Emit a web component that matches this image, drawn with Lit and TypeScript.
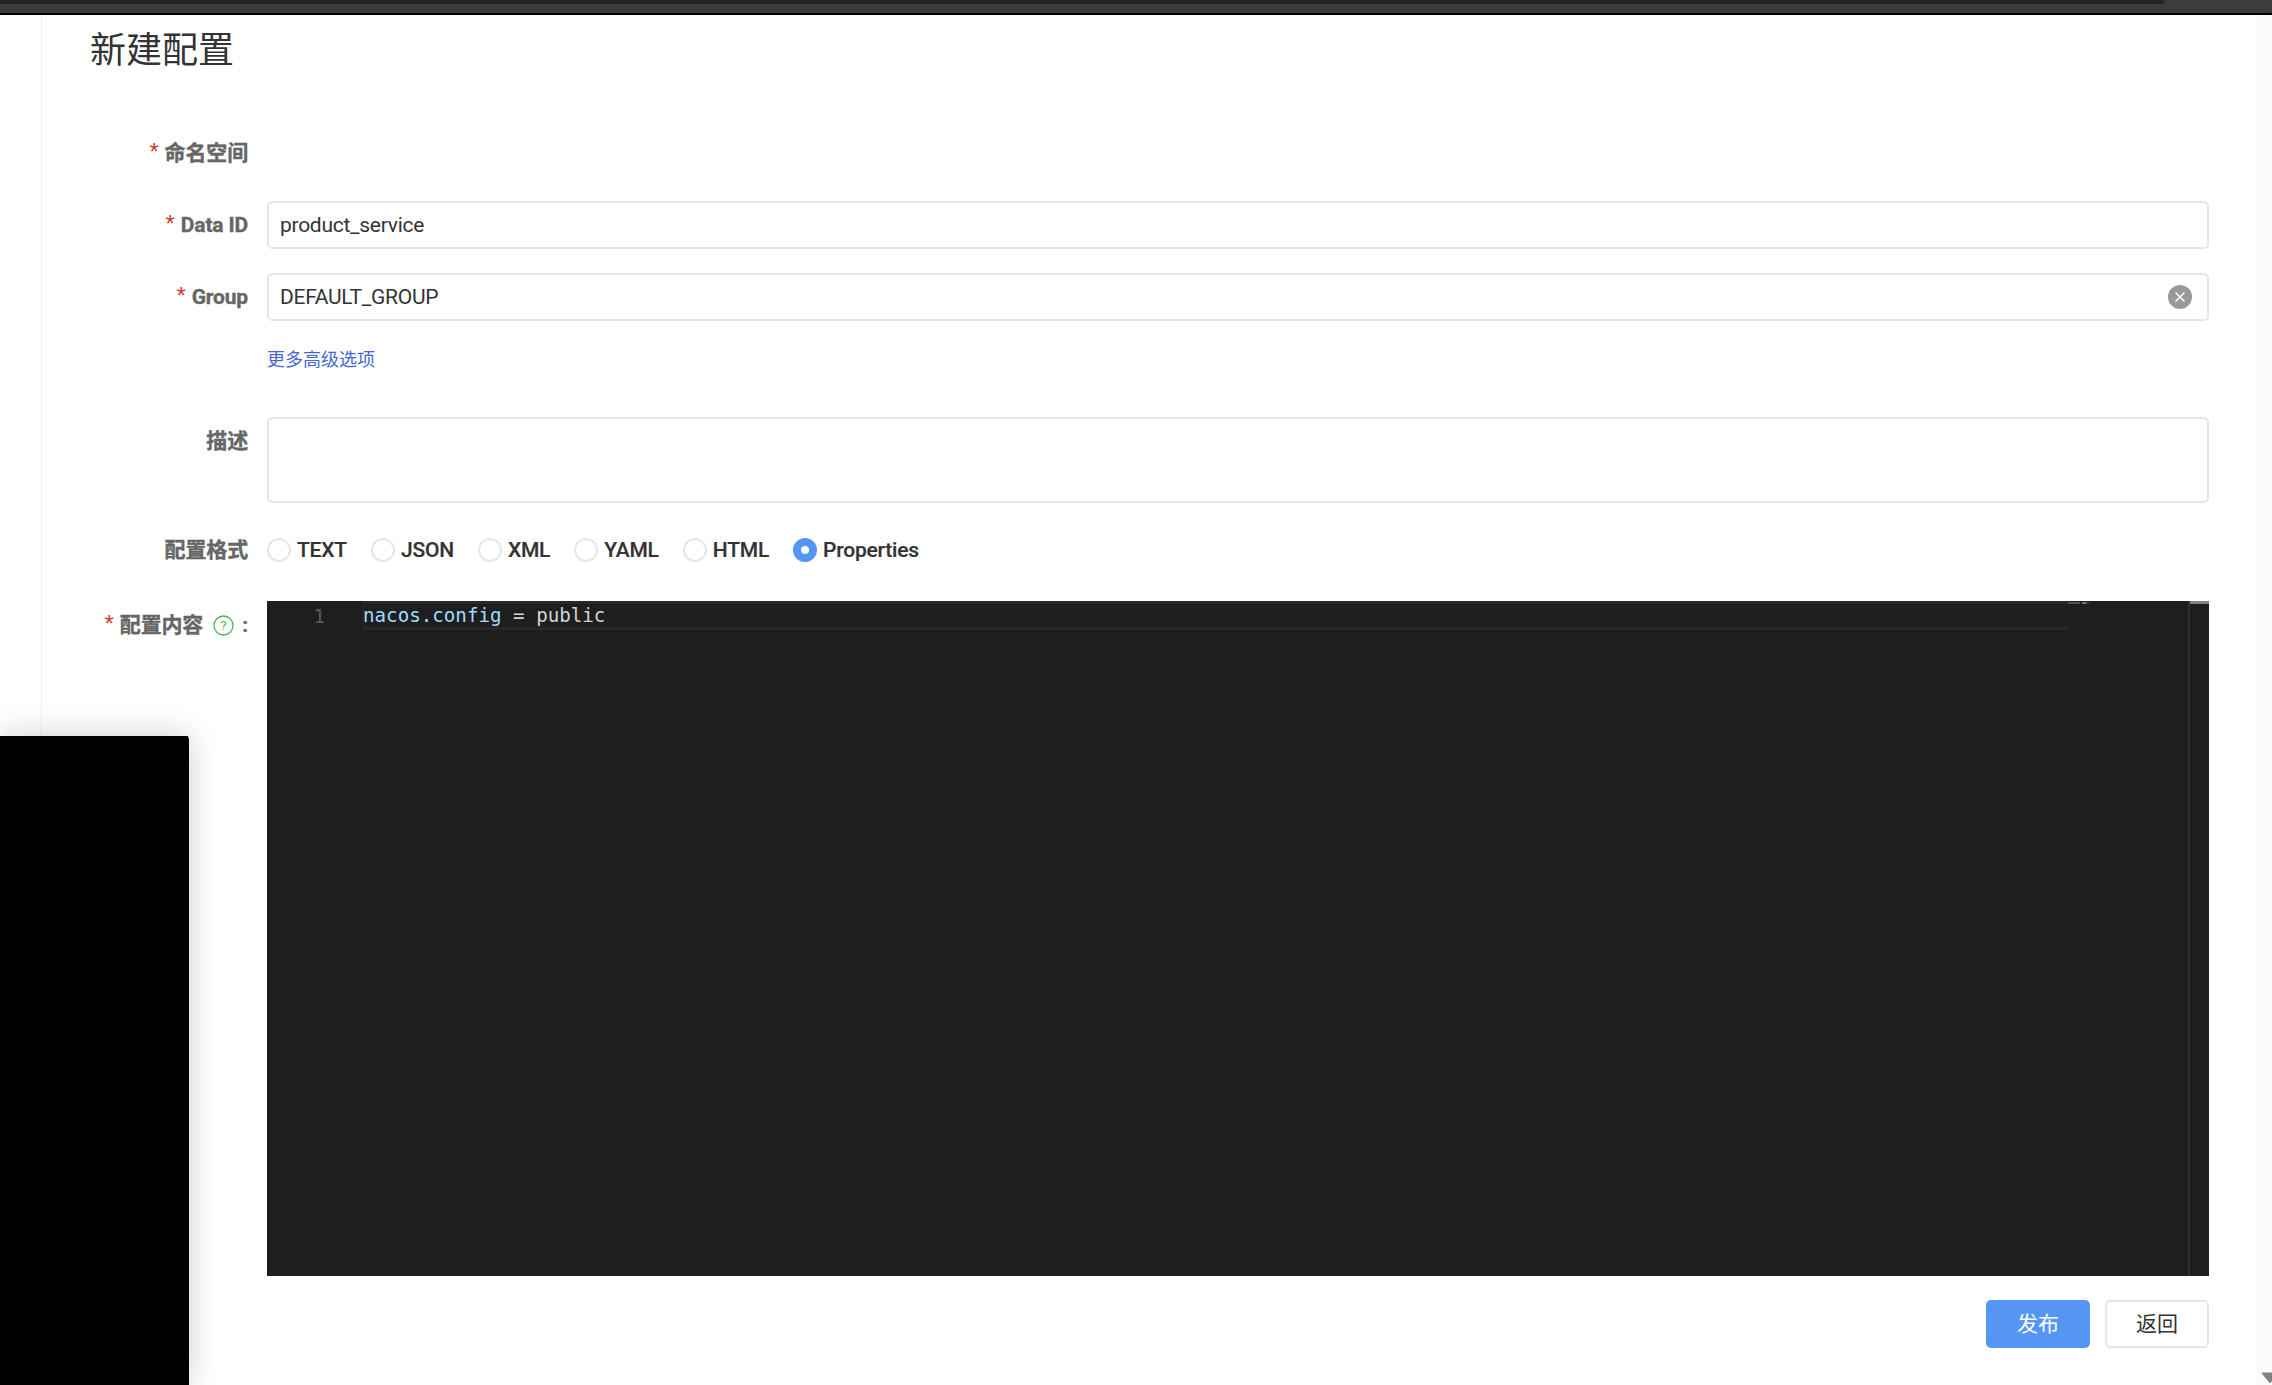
import { LitElement, html, css } from "lit";
import { customElement } from "lit/decorators.js";

const FORMATS = ["TEXT", "JSON", "XML", "YAML", "HTML", "Properties"];

@customElement("app-root")
export class AppRoot extends LitElement {
  static styles = css`
    :host {
      display: flex;
      flex-direction: column;
      position: relative;
      height: 1385px;
      overflow: hidden;
      background: #fff;
      font-family: Roboto, "Noto Sans CJK SC", sans-serif;
      color: #333;
    }
    .chrome { height: 15px; flex: none; background: #3c3c3c; border-bottom: 2px solid #000; box-sizing: border-box; }
    .tabstrip { width: 2165px; height: 4px; background: #242424; border-bottom-right-radius: 6px; }
    .main { flex: 1; display: flex; min-height: 0; }
    .side { width: 41px; flex: none; border-right: 1px solid #eee; }
    .content { flex: 1; min-width: 0; padding-right: 48px; }
    .track { width: 15px; flex: none; background: #fafafa; display: flex; flex-direction: column; justify-content: flex-end; overflow: hidden; }
    .track svg { display: block; margin-bottom: 1px; }
    h1 { margin: 0 0 0 48px; height: 114px; font-size: 36px; font-weight: 400; line-height: 72px; color: #333; }
    .row { display: grid; grid-template-columns: 206px 1fr; column-gap: 19px; margin-bottom: 24px; }
    .label { font-size: 21px; font-weight: 700; line-height: 48px; color: #666; text-align: right; white-space: nowrap; letter-spacing: -0.15px; -webkit-text-stroke: 0.35px #666; }
    .star { font-family: "Liberation Sans", sans-serif; font-size: 24px; line-height: 0; color: #d23c26; -webkit-text-stroke: 0; margin-right: 6px; font-weight: 400; }
    .field {
      box-sizing: border-box; height: 48px; border: 2px solid #e6e6e6; border-radius: 5px;
      display: flex; align-items: center; justify-content: space-between;
      padding: 0 15px 0 11px; font-size: 21px; color: #333; letter-spacing: -0.27px;
    }
    .clear { width: 24px; height: 24px; display: block; }
    .link { font-size: 18px; line-height: 30px; color: #4468d8; }
    .more { margin-bottom: 42px; }
    .area { box-sizing: border-box; height: 86px; border: 2px solid #e6e6e6; border-radius: 5px; }
    .desc { margin-bottom: 23px; }
    .format { margin-bottom: 27px; }
    .radios { display: flex; align-items: center; gap: 24px; height: 48px; }
    .radio { display: flex; align-items: center; gap: 6px; font-size: 21px; font-weight: 500; color: #333; letter-spacing: -0.2px; -webkit-text-stroke: 0.2px #333; }
    .dot { box-sizing: border-box; width: 24px; height: 24px; border-radius: 50%; border: 2px solid #e6e6e6; background: #fff; }
    .dot.on { border: 8px solid #5596f5; background: #fff; }
    .help { display: inline-block; width: 21px; height: 21px; vertical-align: -4px; margin: 0 8px 0 10px; -webkit-text-stroke: 0; }
    .editor { height: 675px; background: #1e1e1e; display: flex; overflow: hidden; position: relative; }
    .gutter { width: 96px; flex: none; padding-top: 3px; box-sizing: border-box; font: 19.18px/26px "DejaVu Sans Mono", monospace; color: #5a5a5a; text-align: right; }
    .gutter span { display: block; padding-right: 38px; }
    .code { flex: none; width: 1705px; }
    .line { box-sizing: border-box; height: 29px; border-style: solid; border-color: #282828; border-width: 3px 0 3px 1px; font: 19.18px/23px "DejaVu Sans Mono", monospace; color: #d4d4d4; white-space: pre; text-indent: -1px; }
    .key { color: #9cdcfe; }
    .mini {
      width: 21px; height: 2px; flex: none; margin: 1px auto 0 0;
      background: linear-gradient(90deg, #44566a 0 12px, #1e1e1e 12px 14px, #707070 14px 18px, #444 18px 21px);
    }
    .ruler { width: 21px; flex: none; border-left: 2px solid #303030; box-sizing: border-box; }
    .thumb { height: 3px; background: #808080; }
    .actions { display: flex; justify-content: flex-end; gap: 15px; margin-top: 24px; }
    .btn { box-sizing: border-box; width: 104px; height: 48px; border-radius: 5px; font-size: 21px; display: flex; align-items: center; justify-content: center; padding-bottom: 5px; }
    .btn.primary { background: #5596f5; color: #fff; }
    .btn.normal { border: 2px solid #e6e6e6; color: #333; background: #fff; }
    .cover { position: absolute; left: 0; top: 736px; bottom: 0; width: 189px; background: #000; box-shadow: 0 0 30px rgba(0,0,0,.2); }
    .cover::after { content: ""; position: absolute; right: 0; top: 0; width: 1px; height: 2px; background: #ddd; }
  `;

  render() {
    return html`
      <div class="chrome"><div class="tabstrip"></div></div>
      <div class="main">
        <div class="side"></div>
        <div class="content">
          <h1>新建配置</h1>
          <div class="row"><div class="label"><span class="star">*</span>命名空间</div><div></div></div>
          <div class="row">
            <div class="label"><span class="star">*</span>Data ID</div>
            <div class="field">product_service</div>
          </div>
          <div class="row">
            <div class="label"><span class="star">*</span>Group</div>
            <div class="field">DEFAULT_GROUP
              <svg class="clear" viewBox="0 0 24 24"><circle cx="12" cy="12" r="12" fill="#999"/><path d="M7.5 7.5l9 9M16.500 7.500l-9 9" stroke="#fff" stroke-width="1.500"/></svg>
            </div>
          </div>
          <div class="row more"><div></div><div class="link">更多高级选项</div></div>
          <div class="row desc"><div class="label">描述</div><div class="area"></div></div>
          <div class="row format">
            <div class="label">配置格式</div>
            <div class="radios">
              ${FORMATS.map((f) => html`<div class="radio"><span class="dot ${f === "Properties" ? "on" : ""}"></span>${f}</div>`)}
            </div>
          </div>
          <div class="row" style="margin-bottom:0">
            <div class="label"><span class="star">*</span>配置内容<svg class="help" viewBox="0 0 21 21"><circle cx="10.500" cy="10.500" r="9.500" fill="none" stroke="#4db84d" stroke-width="1.300"/><text x="10.500" y="15" text-anchor="middle" font-size="13" font-weight="400" fill="#4db84d">?</text></svg>:</div>
            <div class="editor">
              <div class="gutter"><span>1</span></div>
              <div class="code"><div class="line"><span class="key">nacos.config</span> = public</div></div>
              <div class="mini"></div>
              <div class="ruler"><div class="thumb"></div></div>
            </div>
          </div>
          <div class="row" style="margin-bottom:0">
            <div></div>
            <div class="actions"><div class="btn primary">发布</div><div class="btn normal">返回</div></div>
          </div>
        </div>
        <div class="track"><svg width="20" height="12" viewBox="0 0 20 12"><path d="M5 1h15l-7 10z" fill="#808080" stroke="#808080" stroke-linejoin="round"/></svg></div>
      </div>
      <div class="cover"></div>
    `;
  }
}
